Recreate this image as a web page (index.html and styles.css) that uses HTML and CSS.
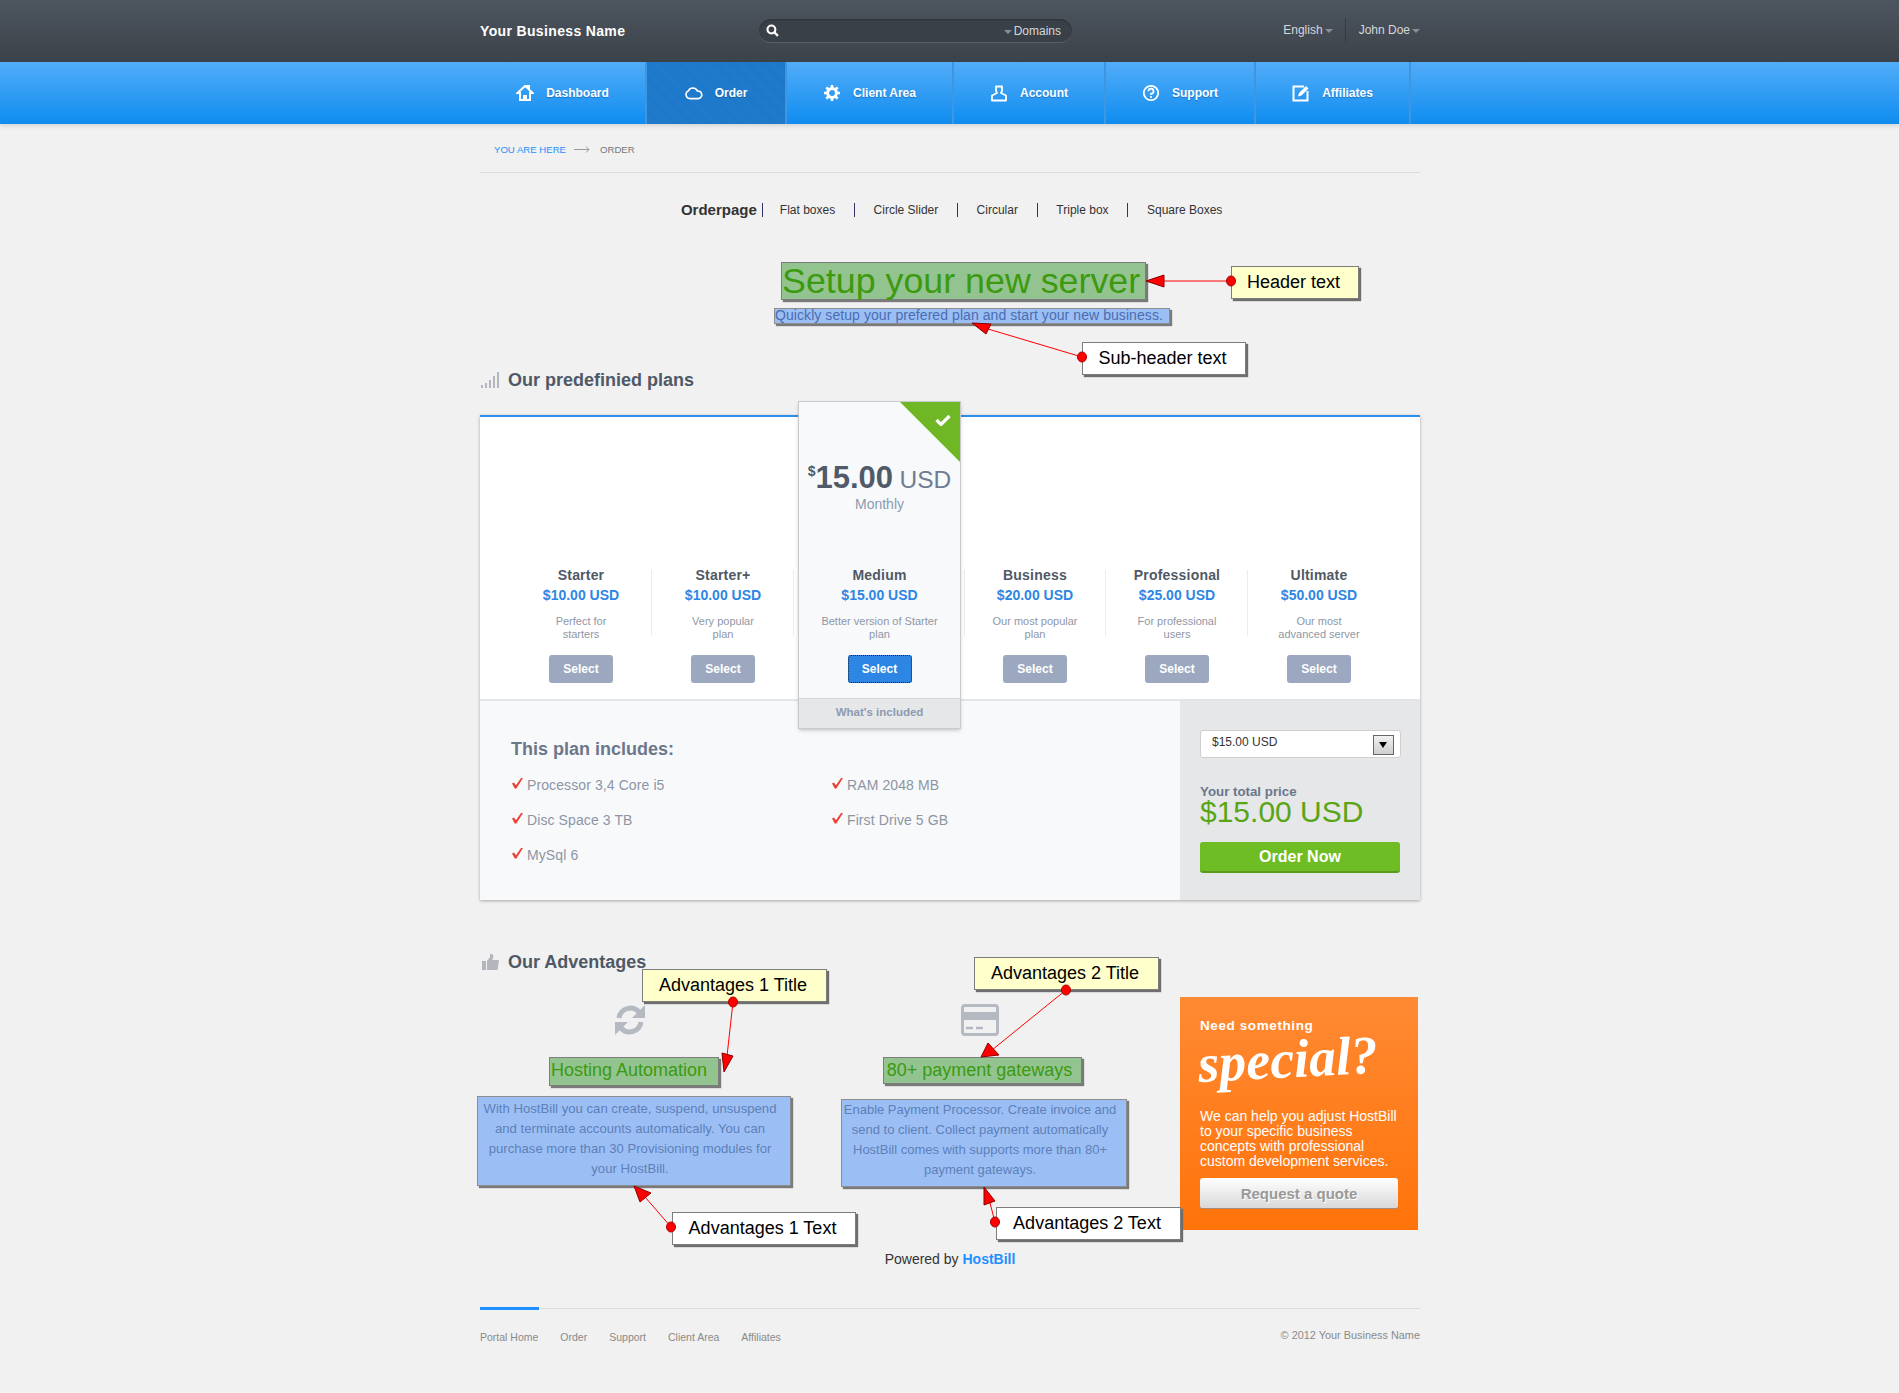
FILE: index.html
```html
<!DOCTYPE html>
<html lang="en">
<head>
    <meta charset="UTF-8">
    <title>Order - Your Business Name</title>
    <link rel="stylesheet" href="styles.css">
</head>
<body>

<header class="topbar">
    <div class="wrap topbar-in">
        <div class="brand">Your Business Name</div>
        <div class="search">
            <svg class="search-icon" viewBox="0 0 12 12"><circle cx="5" cy="5" r="3.6" fill="none" stroke="#fff" stroke-width="2"/><path d="M7.6 7.6L11 11" stroke="#fff" stroke-width="2.2"/></svg>
            <span class="search-scope"><i class="caret"></i>Domains</span>
        </div>
        <div class="user-links">
            <span class="user-link">English<i class="caret"></i></span>
            <span class="user-link user-link-last">John Doe<i class="caret"></i></span>
        </div>
    </div>
</header>

<nav class="mainnav">
    <div class="wrap mainnav-in">
        <a class="nav-item nav-dash">
            <svg viewBox="0 0 18 18"><path d="M9 2L1.5 9H4v7h4v-4h2v4h4V9h2.500L13 5.500V2h-2v1.600z" fill="none" stroke="#fff" stroke-width="2"/></svg>
            Dashboard
        </a>
        <a class="nav-item nav-order active">
            <svg viewBox="0 0 20 16"><path d="M5.500 14.200A4.500 4.500 0 0 1 3.800 5.600 5.500 5.500 0 0 1 13.800 5.800 4.200 4.200 0 0 1 15 14.200z" fill="none" stroke="#fff" stroke-width="1.800"/></svg>
            Order
        </a>
        <a class="nav-item nav-client">
            <svg viewBox="0 0 18 18"><circle cx="9" cy="9" r="4.500" fill="none" stroke="#fff" stroke-width="3"/><path d="M9 1v3M9 14v3M1 9h3M14 9h3M3.300 3.300l2.200 2.200M12.500 12.500l2.200 2.200M3.300 14.700l2.200-2.200M12.500 5.500l2.200-2.200" stroke="#fff" stroke-width="2.600"/></svg>
            Client Area
        </a>
        <a class="nav-item nav-account">
            <svg viewBox="0 0 18 18"><path d="M6 2.500h6v4.500l-1 2 5 2.500V16.500H2V11.500l5-2.500-1-2z" fill="none" stroke="#fff" stroke-width="1.800" stroke-linejoin="round"/></svg>
            Account
        </a>
        <a class="nav-item nav-support">
            <svg viewBox="0 0 18 18"><circle cx="9" cy="9" r="7.200" fill="none" stroke="#fff" stroke-width="1.800"/><path d="M6.500 7.200A2.500 2.500 0 1 1 9 9.700v1.300" fill="none" stroke="#fff" stroke-width="1.700"/><rect x="8.100" y="12" width="1.800" height="1.800" fill="#fff"/></svg>
            Support
        </a>
        <a class="nav-item nav-aff">
            <svg viewBox="0 0 18 18"><path d="M12 2.500H1.500v14h14V7" fill="none" stroke="#fff" stroke-width="2"/><path d="M6 12.500l1-3.500 7-7 2.500 2.500-7 7z" fill="#fff"/></svg>
            Affiliates
        </a>
    </div>
</nav>

<div class="wrap">
    <div class="crumbs">
        <span class="crumb-here">YOU ARE HERE</span>
        <svg class="crumb-arrow" viewBox="0 0 16 7"><path d="M0 3.500h15M12 .5l3 3-3 3" fill="none" stroke="#999" stroke-width="1"/></svg>
        <span>ORDER</span>
    </div>

    <ul class="submenu">
        <li class="submenu-title">Orderpage</li>
        <li>Flat boxes</li>
        <li>Circle Slider</li>
        <li>Circular</li>
        <li>Triple box</li>
        <li>Square Boxes</li>
    </ul>

    <h1 class="hero-title mark-green">Setup your new server</h1>
    <p class="hero-sub mark-blue">Quickly setup your prefered plan and start your new business.</p>

    <h2 class="section-title section-plans">
        <svg class="bars-icon" viewBox="0 0 18 16"><path d="M0 13h2v3H0zM4 11h2v5H4zM8 8h2v8H8zM12 4h2v12h-2zM16 0h2v16h-2z" fill="#b3b7bd"/></svg>
        Our predefinied plans
    </h2>

    <section class="plans">
        <div class="plan-row">
            <div class="plan plan-sep">
                <h3>Starter</h3>
                <div class="plan-price">$10.00 USD</div>
                <p>Perfect for<br>starters</p>
                <button class="select-btn">Select</button>
            </div>
            <div class="plan plan-sep">
                <h3>Starter+</h3>
                <div class="plan-price">$10.00 USD</div>
                <p>Very popular<br>plan</p>
                <button class="select-btn">Select</button>
            </div>
            <div class="plan plan-featured">
                <div class="corner"><svg viewBox="0 0 16 12"><path d="M1.500 6l4.500 4.500L14.500 2" fill="none" stroke="#fff" stroke-width="3.200"/></svg></div>
                <div class="big-price"><sup>$</sup><b>15.00</b> <span>USD</span></div>
                <div class="big-period">Monthly</div>
                <h3>Medium</h3>
                <div class="plan-price">$15.00 USD</div>
                <p>Better version of Starter<br>plan</p>
                <button class="select-btn select-on">Select</button>
                <div class="whats">What's included</div>
            </div>
            <div class="plan plan-sep plan-sep-left">
                <h3>Business</h3>
                <div class="plan-price">$20.00 USD</div>
                <p>Our most popular<br>plan</p>
                <button class="select-btn">Select</button>
            </div>
            <div class="plan plan-sep">
                <h3>Professional</h3>
                <div class="plan-price">$25.00 USD</div>
                <p>For professional<br>users</p>
                <button class="select-btn">Select</button>
            </div>
            <div class="plan">
                <h3>Ultimate</h3>
                <div class="plan-price">$50.00 USD</div>
                <p>Our most<br>advanced server</p>
                <button class="select-btn">Select</button>
            </div>
        </div>

        <div class="plan-bottom">
            <div class="includes">
                <h4>This plan includes:</h4>
                <ul class="feature-list">
                    <li>Processor 3,4 Core i5</li>
                    <li>RAM 2048 MB</li>
                    <li>Disc Space 3 TB</li>
                    <li>First Drive 5 GB</li>
                    <li>MySql 6</li>
                </ul>
            </div>
            <div class="checkout">
                <div class="fake-select">
                    <span>$15.00 USD</span>
                    <i class="fake-select-btn"></i>
                </div>
                <div class="total-label">Your total price</div>
                <div class="total-price">$15.00 USD</div>
                <button class="order-btn">Order Now</button>
            </div>
        </div>
    </section>

    <h2 class="section-title section-adv">
        <svg class="thumb-icon" viewBox="0 0 17 16"><path d="M0 7h4v9H0zM5 7l3-4V0h2l1.500 2-1 4H17l-1.500 10H5z" fill="#b3b7bd"/></svg>
        Our Adventages
    </h2>

    <div class="adv-row">
        <div class="adv adv-one">
            <svg class="adv-icon" viewBox="0 0 32 32"><path d="M5 14A11.500 11.500 0 0 1 25 8" fill="none" stroke="#b4b9c2" stroke-width="5"/><path d="M31 1v13H18z" fill="#b4b9c2"/><path d="M27 18A11.500 11.500 0 0 1 7 24" fill="none" stroke="#b4b9c2" stroke-width="5"/><path d="M1 31V18h13z" fill="#b4b9c2"/></svg>
            <h3 class="adv-title mark-green">Hosting Automation</h3>
            <p class="adv-text mark-blue">With HostBill you can create, suspend, unsuspend<br>and terminate accounts automatically. You can<br>purchase more than 30 Provisioning modules for<br>your HostBill.</p>
        </div>
        <div class="adv adv-two">
            <svg class="adv-icon adv-icon-card" viewBox="0 0 38 32"><rect x="1.500" y="1.500" width="35" height="29" rx="2.500" fill="none" stroke="#b4b9c2" stroke-width="3"/><rect x="2" y="8" width="34" height="8" fill="#b4b9c2"/><path d="M5 24h7M15 24h7" stroke="#b4b9c2" stroke-width="2.500"/></svg>
            <h3 class="adv-title mark-green">80+ payment gateways</h3>
            <p class="adv-text mark-blue">Enable Payment Processor. Create invoice and<br>send to client. Collect payment automatically<br>HostBill comes with supports more than 80+<br>payment gateways.</p>
        </div>
        <aside class="special">
            <div class="special-need">Need something</div>
            <div class="special-word">special?</div>
            <p>We can help you adjust HostBill to your specific business concepts with professional custom development services.</p>
            <button class="quote-btn">Request a quote</button>
        </aside>
    </div>

    <div class="powered">Powered by <a>HostBill</a></div>

    <footer class="footer">
        <i class="footer-accent"></i>
        <div class="footer-in">
            <ul class="footer-links">
                <li>Portal Home</li>
                <li>Order</li>
                <li>Support</li>
                <li>Client Area</li>
                <li>Affiliates</li>
            </ul>
            <div class="copyright">&copy; 2012 Your Business Name</div>
        </div>
    </footer>
</div>

<!-- annotation callouts drawn on top of the page -->
<svg class="arrows" viewBox="0 0 1899 1393">
    <g stroke="#f00" stroke-width="1" fill="#f00">
        <path d="M1231 281H1160"/><polygon points="1146,281 1164,275 1164,287" stroke="#800"/><ellipse cx="1231" cy="281" rx="4.500" ry="5" stroke="#a00"/>
        <path d="M1082 357L988 329"/><polygon points="972,323 991,324 986,334" stroke="#800"/><ellipse cx="1082" cy="357" rx="4.500" ry="5" stroke="#a00"/>
        <path d="M733 1002L727 1056"/><polygon points="724,1072 722,1053 733,1056" stroke="#800"/><ellipse cx="733" cy="1002" rx="4.500" ry="5" stroke="#a00"/>
        <path d="M1066 990L992 1050"/><polygon points="981,1057 988,1043 999,1055" stroke="#800"/><ellipse cx="1066" cy="990" rx="4.500" ry="5" stroke="#a00"/>
        <path d="M671 1227L645 1197"/><polygon points="634,1186 651,1193 640,1202" stroke="#800"/><ellipse cx="671" cy="1227" rx="4.500" ry="5" stroke="#a00"/>
        <path d="M995 1222L990 1203"/><polygon points="984,1187 995,1201 984,1205" stroke="#800"/><ellipse cx="995" cy="1222" rx="4.500" ry="5" stroke="#a00"/>
    </g>
</svg>
<div class="note note-yellow note-header">Header text</div>
<div class="note note-sub">Sub-header text</div>
<div class="note note-yellow note-adv1">Advantages 1 Title</div>
<div class="note note-yellow note-adv2">Advantages 2 Title</div>
<div class="note note-adv1t">Advantages 1 Text</div>
<div class="note note-adv2t">Advantages 2 Text</div>

</body>
</html>
```

FILE: styles.css
```css
* {
    box-sizing: border-box;
}
html, body {
    margin: 0;
    padding: 0;
}
body {
    position: relative;
    height: 1393px;
    overflow: hidden;
    background-color: #f1f1f1;
    font-family: "Liberation Sans", Arial, sans-serif;
    color: #333;
}
ul {
    list-style: none;
    margin: 0;
    padding: 0;
}
button {
    font-family: inherit;
    border: none;
    display: block;
}
.wrap {
    width: 940px;
    margin-left: 480px;
}

/* top bar */
.topbar {
    height: 62px;
    background: linear-gradient(#4d555f, #3c4249);
}
.topbar-in {
    display: flex;
    align-items: center;
    height: 62px;
}
.brand {
    width: 279px;
    font-size: 14px;
    font-weight: bold;
    letter-spacing: .35px;
    color: #fff;
}
.search {
    display: flex;
    align-items: center;
    justify-content: space-between;
    width: 313px;
    height: 24px;
    padding: 0 11px 0 7px;
    border-radius: 12px;
    background: #3a4047;
    border-bottom: 1px solid #5a6068;
    box-shadow: inset 0 1px 2px rgba(0, 0, 0, .25);
}
.search-icon {
    width: 13px;
    height: 13px;
}
.search-scope {
    font-size: 12px;
    color: #d5d8db;
}
.caret {
    display: inline-block;
    width: 0;
    height: 0;
    border-left: 4px solid transparent;
    border-right: 4px solid transparent;
    border-top: 4px solid #888e95;
    margin: 0 2px;
    vertical-align: 1px;
}
.user-links {
    display: flex;
    align-items: center;
    margin-left: auto;
    height: 24px;
    margin-top: -2px;
}
.user-link {
    font-size: 12px;
    color: #d5d8db;
    padding-right: 12px;
}
.user-link .caret {
    margin-right: 0;
}
.user-link-last {
    border-left: 1px solid #363b41;
    line-height: 24px;
    padding: 0 0 0 13px;
}

/* main navigation */
.mainnav {
    height: 62px;
    background: linear-gradient(#52adf8, #0f8cf0);
    box-shadow: 0 2px 4px rgba(0, 0, 0, .12);
}
.mainnav-in {
    display: flex;
    height: 62px;
}
.nav-item {
    display: flex;
    align-items: center;
    justify-content: center;
    gap: 12px;
    height: 62px;
    font-size: 12px;
    font-weight: bold;
    color: #fff;
    text-shadow: 0 1px 1px rgba(0, 60, 120, .4);
    border-right: 2px solid #3f96e0;
}
.nav-item svg {
    width: 18px;
    height: 18px;
}
.nav-dash { width: 167px; }
.nav-order { width: 140px; }
.nav-client { width: 167px; }
.nav-account { width: 152px; }
.nav-support { width: 150px; }
.nav-aff { width: 155px; }
.nav-item.active {
    background-color: #1b77c9;
    background-image: repeating-linear-gradient(45deg, rgba(255, 255, 255, .03) 0 1px, transparent 1px 2px);
    border-left: 2px solid #3f96e0;
    margin-left: -2px;
    width: 142px;
}

/* breadcrumb + sub menu */
.crumbs {
    display: flex;
    align-items: center;
    height: 49px;
    padding: 2px 0 0 14px;
    border-bottom: 1px solid #dcdcdc;
    font-size: 9.600px;
    color: #777;
}
.crumb-here {
    color: #1e90ff;
}
.crumb-arrow {
    width: 16px;
    height: 7px;
    margin: 0 10px 0 8px;
}
.submenu {
    display: flex;
    justify-content: center;
    align-items: center;
    height: 20px;
    margin: 27px 0 0 22px;
    font-size: 12px;
}
.submenu li {
    line-height: 14px;
    padding: 0 18.700px;
    border-left: 1px solid #336;
}
.submenu .submenu-title {
    font-size: 15px;
    font-weight: bold;
    border: none;
    padding: 0 5px 0 0;
}
.submenu .submenu-title + li {
    padding-left: 17px;
}

/* highlighted regions */
.mark-green {
    background: #93c48f;
    color: #3c9a10;
    border: 1px solid #7d7d7d;
    box-shadow: 2px 2px 1px #7a7a7a;
    font-weight: normal;
}
.mark-blue {
    background: #9bbff5;
    color: #5e80b8;
    border: 1px solid #8d8d8d;
    box-shadow: 2px 2px 1px #7a7a7a;
}
.hero-title {
    width: 365px;
    height: 38px;
    margin: 42px 0 0 301px;
    font-size: 35.800px;
    line-height: 36px;
    white-space: nowrap;
}
.hero-sub {
    width: 396px;
    height: 16px;
    margin: 8px 0 0 294px;
    font-size: 14px;
    letter-spacing: .07px;
    line-height: 12px;
    white-space: nowrap;
    color: #4a6cb0;
}

/* section titles */
.section-title {
    display: flex;
    align-items: center;
    height: 24px;
    margin: 0;
    font-size: 18px;
    color: #4f5966;
}
.section-plans {
    margin-top: 44px;
}
.bars-icon {
    width: 18px;
    height: 16px;
    margin: 0 9px 0 1px;
}
.section-adv {
    margin-top: 50px;
}
.thumb-icon {
    width: 17px;
    height: 16px;
    margin: 0 9px 0 2px;
}

/* plans card */
.plans {
    margin-top: 23px;
    height: 485px;
    background: #fff;
    border-top: 2px solid #2c8fe8;
    box-shadow: 0 1px 3px rgba(0, 0, 0, .3);
}
.plan-row {
    display: flex;
    height: 282px;
    padding-left: 30px;
}
.plan {
    width: 142px;
    padding-top: 150px;
    text-align: center;
}
.plan-sep {
    background: linear-gradient(#ececec, #ececec) right 153px / 1px 66px no-repeat;
}
.plan-sep-left {
    background:
        linear-gradient(#ececec, #ececec) right 153px / 1px 66px no-repeat,
        linear-gradient(#ececec, #ececec) left 153px / 1px 66px no-repeat;
}
.plan h3 {
    margin: 0;
    font-size: 14px;
    letter-spacing: .2px;
    line-height: 16px;
    color: #4f5966;
}
.plan-price {
    margin-top: 2px;
    font-size: 14px;
    line-height: 20px;
    font-weight: bold;
    color: #2e86e4;
}
.plan p {
    margin: 10px 0 0;
    font-size: 11px;
    line-height: 13px;
    color: #8f97a6;
}
.select-btn {
    width: 64px;
    height: 28px;
    margin: 14px auto 0;
    border-radius: 3px;
    background: #9ba8bf;
    color: #fff;
    font-size: 12px;
    font-weight: bold;
}
.select-on {
    background: #2e86e4;
    outline: 1px dotted #123;
    outline-offset: -1px;
}
.plan-featured {
    position: relative;
    z-index: 2;
    display: flex;
    flex-direction: column;
    width: 161px;
    height: 326px;
    margin: -15px 4px 0 5px;
    padding: 0;
    background: #f8f9fb;
    box-shadow: 0 0 0 1px #c8cacd, 0 2px 4px rgba(0, 0, 0, .25);
}
.corner {
    position: absolute;
    top: 0;
    right: 0;
    width: 60px;
    height: 60px;
    background: #6fb725;
    clip-path: polygon(0 0, 100% 0, 100% 100%);
}
.corner svg {
    position: absolute;
    top: 12px;
    right: 9px;
    width: 16px;
    height: 12px;
}
.big-price {
    height: 40px;
    margin-top: 56px;
    line-height: 40px;
    white-space: nowrap;
    color: #505a68;
}
.big-price sup {
    font-size: 14px;
    font-weight: bold;
    line-height: 0;
    vertical-align: 12px;
}
.big-price b {
    font-size: 31px;
}
.big-price span {
    font-size: 24.500px;
    color: #6f7c93;
    margin-left: 2px;
}
.big-period {
    margin: -3px 0 54px;
    font-size: 14px;
    line-height: 18px;
    color: #8d9ab0;
}
.whats {
    margin-top: 15px;
    height: 30px;
    line-height: 27px;
    background: #e6e7e9;
    border-top: 1px solid #d5d6d9;
    font-size: 11.500px;
    font-weight: bold;
    color: #8d9ab0;
}
.plan-bottom {
    display: flex;
    height: 201px;
    border-top: 2px solid #e4e5e8;
}
.includes {
    width: 700px;
    padding: 36px 0 0 32px;
    background: #f8f9fb;
}
.includes h4 {
    margin: 0 0 6px -1px;
    font-size: 18px;
    line-height: 24px;
    color: #6b7789;
}
.feature-list {
    display: grid;
    grid-template-columns: 320px 320px;
    grid-auto-rows: 35px;
}
.feature-list li {
    display: flex;
    align-items: center;
    font-size: 14px;
    letter-spacing: .1px;
    color: #8d95a5;
}
.feature-list li::before {
    content: "";
    width: 11px;
    height: 11px;
    margin: -3px 4px 0 0;
    background: #ea4335;
    clip-path: polygon(0 55%, 18% 45%, 36% 70%, 85% 0, 100% 5%, 40% 100%, 25% 100%);
}
.checkout {
    width: 240px;
    padding: 29px 0 0 20px;
    background: #e6e7e9;
}
.fake-select {
    display: flex;
    justify-content: space-between;
    width: 201px;
    height: 28px;
    padding: 4px 6px 0 11px;
    background: #fff;
    border: 1px solid #cfcfd2;
    border-radius: 3px;
    font-size: 12px;
    color: #333;
}
.fake-select span {
    line-height: 14px;
}
.fake-select-btn {
    position: relative;
    display: block;
    width: 21px;
    height: 20px;
    background: linear-gradient(#f0f0f0, #cfcfcf);
    border: 1px solid #666;
}
.fake-select-btn::after {
    content: "";
    position: absolute;
    top: 6px;
    left: 5px;
    border-left: 4px solid transparent;
    border-right: 4px solid transparent;
    border-top: 6px solid #000;
}
.total-label {
    margin-top: 26px;
    font-size: 13.300px;
    font-weight: bold;
    line-height: 16px;
    color: #6b7789;
}
.total-price {
    margin-top: -3px;
    font-size: 30px;
    line-height: 30px;
    color: #5aa516;
}
.order-btn {
    width: 200px;
    height: 31px;
    margin-top: 15px;
    border-radius: 3px;
    border-bottom: 2px solid #5b9a1c;
    background: #6fbd24;
    color: #fff;
    font-size: 16px;
    font-weight: bold;
}

/* advantages */
.adv-row {
    display: flex;
    margin-top: 23px;
    height: 233px;
}
.adv {
    display: flex;
    flex-direction: column;
    align-items: center;
    padding-top: 7px;
    text-align: center;
}
.adv-one {
    width: 314px;
    margin-left: -3px;
}
.adv-two {
    width: 286px;
    margin-left: 50px;
}
.adv-icon {
    width: 32px;
    height: 32px;
    margin-bottom: 21px;
    margin-left: -8px;
}
.adv-icon-card {
    width: 38px;
    margin-left: -9px;
}
.adv-title {
    margin: 0;
    height: 29px;
    padding: 0 11px 0 1px;
    font-size: 18px;
    line-height: 25px;
    white-space: nowrap;
}
.adv-two .adv-title {
    height: 27px;
    margin-left: -3px;
    padding: 0 9px 0 3px;
}
.adv-text {
    width: 100%;
    margin: 10px 0 0;
    padding: 2px 8px 0 0;
    font-size: 13.150px;
    line-height: 20px;
    white-space: nowrap;
}
.adv-one .adv-text {
    height: 90px;
}
.adv-two .adv-text {
    height: 88px;
    margin-top: 15px;
    padding-top: 0;
    font-size: 13px;
}
.special {
    width: 238px;
    height: 233px;
    margin-left: 53px;
    padding: 20px 20px 0;
    background: linear-gradient(#ff8a33, #ff730a);
    color: #fff;
}
.special-need {
    font-size: 13.500px;
    font-weight: bold;
    letter-spacing: .6px;
    line-height: 18px;
}
.special-word {
    height: 67px;
    margin-top: -1px;
    font-family: "Liberation Serif", serif;
    font-style: italic;
    font-weight: bold;
    font-size: 54px;
    line-height: 60px;
    white-space: nowrap;
    transform: rotate(-3deg);
    transform-origin: left bottom;
}
.special p {
    margin: 8px 0 0;
    font-size: 14px;
    line-height: 15px;
}
.quote-btn {
    width: 198px;
    height: 31px;
    margin-top: 9px;
    border-radius: 3px;
    border-bottom: 1px solid #a5897a;
    background: linear-gradient(#fff, #d9d9d9);
    color: #999;
    font-size: 15px;
    font-weight: bold;
    text-shadow: 1px 1px 0 #fff;
}

/* footer */
.powered {
    margin-top: 20px;
    font-size: 14px;
    line-height: 18px;
    text-align: center;
}
.powered a {
    color: #1e90ff;
    font-weight: bold;
}
.footer {
    margin-top: 40px;
    border-top: 1px solid #dcdcdc;
}
.footer-accent {
    display: block;
    width: 59px;
    height: 3px;
    margin-top: -2px;
    background: #1e90ff;
}
.footer-in {
    display: flex;
    justify-content: space-between;
    padding-top: 19px;
    font-size: 10.500px;
    color: #8a8a8a;
}
.footer-links {
    display: flex;
    gap: 22px;
    padding-top: 2px;
}
.copyright {
    font-size: 10.900px;
}

/* annotation layer */
.arrows {
    position: absolute;
    top: 0;
    left: 0;
    width: 1899px;
    height: 1393px;
    z-index: 5;
    pointer-events: none;
}
.note {
    position: absolute;
    z-index: 4;
    display: flex;
    align-items: center;
    justify-content: center;
    padding-right: 3px;
    background: #fff;
    border: 1px solid #7d7d7d;
    box-shadow: 2px 2px 1px #6e6e6e;
    font-size: 18px;
    color: #000;
    white-space: nowrap;
}
.note-yellow {
    background: #ffffcc;
}
.note-header { left: 1231px; top: 266px; width: 128px; height: 33px; }
.note-sub { left: 1082px; top: 342px; width: 164px; height: 33px; }
.note-adv1 { left: 642px; top: 969px; width: 185px; height: 33px; }
.note-adv2 { left: 974px; top: 957px; width: 185px; height: 33px; }
.note-adv1t { left: 672px; top: 1212px; width: 184px; height: 33px; }
.note-adv2t { left: 996px; top: 1207px; width: 185px; height: 33px; }
```
